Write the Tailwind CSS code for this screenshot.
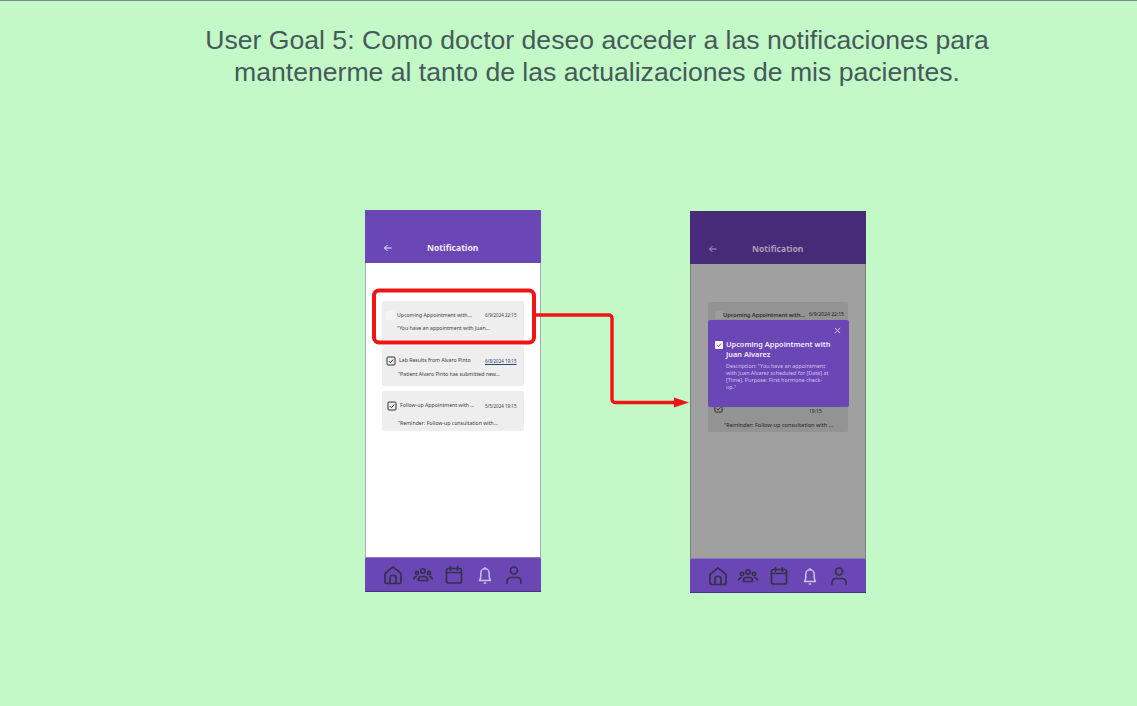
<!DOCTYPE html>
<html lang="en">
<head>
  <meta charset="UTF-8" />
  <title>User Goal 5</title>
  <script src="https://cdn.jsdelivr.net/npm/@tailwindcss/browser@4"></script>
</head>
<body class="relative w-[1137px] h-[706px] overflow-hidden bg-[#c3f8c7] border-t border-[#7d8d84] font-['Noto_Sans',sans-serif]">

  <!-- shared nav icons -->
  <svg class="hidden">
    <symbol id="i-home" viewBox="0 0 20 20"><path d="M2 8.500 10 1.800l8 6.700V16.500a2 2 0 0 1-2 2H4a2 2 0 0 1-2-2Z M7 18.500v-6a2 2 0 0 1 2-2h2a2 2 0 0 1 2 2v6" fill="none" stroke="currentColor" stroke-width="1.700" stroke-linejoin="round"/></symbol>
    <symbol id="i-team" viewBox="0 0 20 20"><g fill="none" stroke="currentColor" stroke-width="1.700"><circle cx="10" cy="6" r="2.200"/><circle cx="4" cy="8" r="1.600"/><circle cx="16" cy="8" r="1.600"/><path d="M5.500 15.500v-1.500a3 3 0 0 1 3-2.500h3a3 3 0 0 1 3 2.500v1.500Z"/><path d="M.800 14.500c0-2 1-3 3-3M19.200 14.500c0-2-1-3-3-3"/></g></symbol>
    <symbol id="i-cal" viewBox="0 0 20 20"><g fill="none" stroke="currentColor" stroke-width="1.700" stroke-linecap="round"><rect x="2.500" y="3.500" width="15" height="14.500" rx="2"/><path d="M2.500 7.500h15M6.500 1.500v3.500M13.500 1.500v3.500"/></g></symbol>
    <symbol id="i-bell" viewBox="0 0 20 20"><g fill="none" stroke="currentColor" stroke-width="1.500" stroke-linejoin="round"><path d="M4.500 15.500c1-1.200 1.300-2.500 1.300-4.500V8a4.200 4.200 0 0 1 8.400 0v3c0 2 .3 3.300 1.300 4.500Z"/><path d="M10 2v1.800M8.800 18h2.400"/></g></symbol>
    <symbol id="i-user" viewBox="0 0 20 20"><g fill="none" stroke="currentColor" stroke-width="1.700" stroke-linecap="round"><circle cx="10" cy="5.500" r="3.500"/><path d="M3 18v-1.500a4 4 0 0 1 4-4h6a4 4 0 0 1 4 4V18"/></g></symbol>
    <symbol id="i-check" viewBox="0 0 10 10"><rect x="1" y="1" width="8" height="8" rx="1" fill="none" stroke="currentColor" stroke-width="1"/><path d="M2.800 5.100 4.400 6.700 7.300 3.500" fill="none" stroke="currentColor" stroke-width="1"/></symbol>
  </svg>

  <h1 class="ml-[197px] w-[800px] pt-[23px] text-center text-[26.600px] leading-[32px] text-[#465a5a] font-['Liberation_Sans',sans-serif]">User Goal 5: Como doctor deseo acceder a las notificaciones para mantenerme al tanto de las actualizaciones de mis pacientes.</h1>

  <div class="flex items-start gap-[149px] pl-[365px] pt-[122px]">

    <!-- phone 1 -->
    <div class="flex flex-col w-[176px] h-[382px] bg-white border-x border-[#a9a9b0]">
      <div class="flex items-center h-[53px] pt-[23px] pl-[18px] bg-[#6b46b5] text-[#f1ecfb] -mx-px">
        <svg class="w-[10px] h-[10px]" viewBox="0 0 10 10" fill="none" stroke="currentColor" stroke-width="1"><path d="M8.500 5h-7M4.500 2 1.500 5l3 3"/></svg>
        <span class="ml-[34px] text-[8.600px] font-bold">Notification</span>
      </div>
      <div class="flex-1 flex flex-col gap-[5px] pt-[38px] px-[16px]">
        <div class="h-[40px] bg-[#eeeeee] rounded-[2px] text-[#3c3c3c] text-[5.200px]">
          <div class="flex items-center pt-[10px] pl-[4px]">
            <svg class="w-[9px] h-[9px] text-[#f6f3f6] mr-[2px]" viewBox="0 0 10 10"><rect width="10" height="10" rx="1" fill="currentColor"/></svg>
            <span class="w-[88px]">Upcoming Appointment with...</span><span class="text-[4.500px]">6/9/2024 22:15</span>
          </div>
          <p class="pt-[5px] pl-[15px]">"You have an appointment with Juan...</p>
        </div>
        <div class="h-[40px] bg-[#eeeeee] rounded-[2px] text-[#3c3c3c] text-[5.200px]">
          <div class="flex items-center pt-[10px] pl-[4px]">
            <svg class="w-[10px] h-[10px] text-[#333] mr-[3px]"><use href="#i-check"/></svg>
            <span class="w-[86px]">Lab Results from Alvaro Pinto</span><span class="text-[4.500px] underline text-[#24436d]">6/8/2024 19:15</span>
          </div>
          <p class="pt-[5px] pl-[16px]">"Patient Alvaro Pinto has submitted new...</p>
        </div>
        <div class="h-[40px] bg-[#eeeeee] rounded-[2px] text-[#3c3c3c] text-[5.200px]">
          <div class="flex items-center pt-[10px] pl-[5px]">
            <svg class="w-[10px] h-[10px] text-[#333] mr-[3px]"><use href="#i-check"/></svg>
            <span class="w-[85px]">Follow-up Appointment with ...</span><span class="text-[4.500px]">5/5/2024 19:15</span>
          </div>
          <p class="pt-[9px] pl-[16px]">"Reminder: Follow-up consultation with...</p>
        </div>
      </div>
      <div class="flex items-center h-[35px] -mx-px pl-[18px] rounded-t-[2px] bg-[#6b46b5] border-t border-[#8e73c8] border-b-[#4b3180] border-b text-[#333348]">
        <svg class="w-[20px] h-[20px]"><use href="#i-home"/></svg>
        <svg class="w-[20px] h-[20px] ml-[10px]"><use href="#i-team"/></svg>
        <svg class="w-[20px] h-[20px] ml-[11px]"><use href="#i-cal"/></svg>
        <svg class="w-[20px] h-[20px] ml-[11px] text-[#c9c4e0]"><use href="#i-bell"/></svg>
        <svg class="w-[20px] h-[20px] ml-[9px]"><use href="#i-user"/></svg>
      </div>
    </div>

    <!-- phone 2, dimmed with the dialog open -->
    <div class="relative mt-px flex flex-col w-[176px] h-[382px] bg-[#a0a0a0] border-x border-[#7f7f7f]">
      <div class="flex items-center h-[53px] pt-[23px] pl-[18px] bg-[#472b78] text-[#a99fb8] -mx-px">
        <svg class="w-[10px] h-[10px]" viewBox="0 0 10 10" fill="none" stroke="currentColor" stroke-width="1"><path d="M8.500 5h-7M4.500 2 1.500 5l3 3"/></svg>
        <span class="ml-[34px] text-[8.600px] font-bold">Notification</span>
      </div>
      <div class="flex-1 flex flex-col gap-[5px] pt-[38px] px-[17px]">
        <div class="h-[40px] bg-[#939393] rounded-[2px] text-[#1c1c1c] text-[5.600px]">
          <div class="flex items-center pt-[9px] pl-[7px]">
            <svg class="w-[8px] h-[8px] text-[#9c9c9c]" viewBox="0 0 10 10"><rect width="10" height="10" rx="1" fill="currentColor"/></svg>
            <span class="w-[86px] font-medium">Upcoming Appointment with...</span><span class="text-[5px]">6/9/2024 22:15</span>
          </div>
        </div>
        <div class="h-[40px]"></div>
        <div class="relative h-[40px] bg-[#939393] rounded-[2px] text-[#262626] text-[5.600px]">
          <svg class="absolute left-[6px] top-[12px] w-[9px] h-[9px] text-[#262626]"><use href="#i-check"/></svg>
          <span class="absolute left-[101px] top-[16px] text-[5px]">19:15</span>
          <p class="pt-[29px] pl-[16px]">"Reminder: Follow-up consultation with ...</p>
        </div>
      </div>
      <div class="flex items-center h-[35px] -mx-px pl-[18px] rounded-t-[2px] bg-[#6b46b5] border-t border-[#8e73c8] border-b-[#4b3180] border-b text-[#333348]">
        <svg class="w-[20px] h-[20px]"><use href="#i-home"/></svg>
        <svg class="w-[20px] h-[20px] ml-[10px]"><use href="#i-team"/></svg>
        <svg class="w-[20px] h-[20px] ml-[11px]"><use href="#i-cal"/></svg>
        <svg class="w-[20px] h-[20px] ml-[11px] text-[#c9c4e0]"><use href="#i-bell"/></svg>
        <svg class="w-[20px] h-[20px] ml-[9px]"><use href="#i-user"/></svg>
      </div>
      <!-- dialog -->
      <div class="absolute left-[17px] top-[109px] w-[141px] h-[87px] rounded-[2px] bg-[#6b46b5] text-white">
        <svg class="absolute right-[8px] top-[7px] w-[7px] h-[7px] text-[#e6e0f2]" viewBox="0 0 8 8" fill="none" stroke="currentColor" stroke-width="1"><path d="m1 1 6 6M7 1 1 7"/></svg>
        <div class="flex pt-[20px] pl-[7px]">
          <svg class="mt-px w-[8px] h-[8px] shrink-0 mr-[3px]" viewBox="0 0 10 10"><rect width="10" height="10" rx="1" fill="#f5f2fb"/><path d="M2.500 5.200 4.300 7 7.500 3.300" fill="none" stroke="#6b46b5" stroke-width="1.100"/></svg>
          <p class="w-[120px] text-[7.400px] leading-[9.500px] font-semibold text-[#f1ecfb]">Upcoming Appointment with Juan Alvarez</p>
        </div>
        <p class="pt-[4px] pl-[18px] text-[5.400px] leading-[7px] text-[#cfc3ea] whitespace-nowrap">Description: "You have an appointment<br />with Juan Alvarez scheduled for [Date] at<br />[Time]. Purpose: First hormone check-<br />up."</p>
      </div>
    </div>
  </div>

  <!-- highlight box and arrow over the mockups -->
  <svg class="absolute left-0 top-0" width="1137" height="706" fill="none">
    <rect x="374" y="289.500" width="160" height="52" rx="5" stroke="#ee1515" stroke-width="4"/>
    <path d="M534 314H609a3 3 0 0 1 3 3V398.500a3 3 0 0 0 3 3H675" stroke="#ee1515" stroke-width="3.400"/>
    <path d="M674 396.500l15 5-15 5Z" fill="#ee1515"/>
  </svg>
</body>
</html>
